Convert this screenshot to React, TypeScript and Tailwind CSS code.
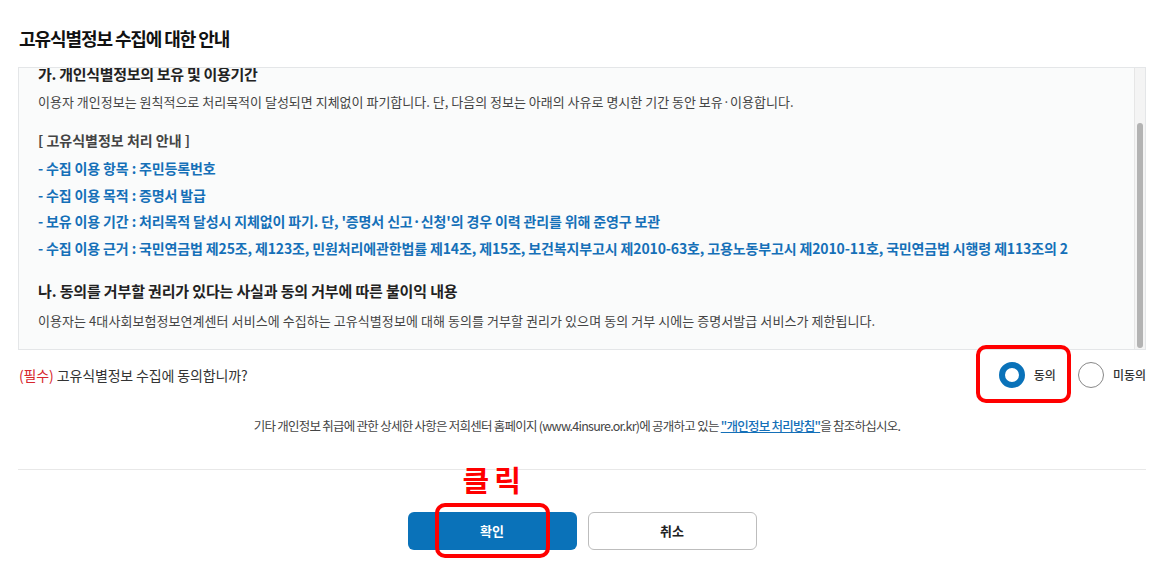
import { useState } from 'react'

const blueLines = [
  ['- 수집 이용 항목 : ', '주민등록번호'],
  ['- 수집 이용 목적 : ', '증명서 발급'],
  ['- 보유 이용 기간 : ', "처리목적 달성시 지체없이 파기. 단, '증명서 신고·신청'의 경우 이력 관리를 위해 준영구 보관"],
  [
    '- 수집 이용 근거 : ',
    '국민연금법 제25조, 제123조, 민원처리에관한법률 제14조, 제15조, 보건복지부고시 제2010-63호, 고용노동부고시 제2010-11호, 국민연금법 시행령 제113조의 2',
  ],
]

export default function App() {
  const [agree, setAgree] = useState(true)

  return (
    <div className="w-[1170px] h-[579px] bg-white overflow-hidden font-['Noto_Sans_CJK_KR','Noto_Sans',sans-serif] text-[#333]">
      <div className="ml-[18px] w-[1128px] pt-[28px]">
        {/* Title */}
        <h1 className="text-[18px] leading-[20px] font-bold text-[#111] tracking-[-0.06em] ml-[1px]">
          고유식별정보 수집에 대한 안내
        </h1>

        {/* Scroll box (content is scrolled down a little) */}
        <div className="mt-[19px] h-[283px] flex border border-[#e4e6e8] bg-[#fafbfb]">
          <div className="flex-1 overflow-hidden px-[19px]">
            <div className="-mt-[5px]">
              <h2 className="text-[15px] leading-[22px] font-bold text-[#222] tracking-[-0.02em]">
                가. 개인식별정보의 보유 및 이용기간
              </h2>
              <p className="mt-[7px] text-[13px] leading-[20px] text-[#444]">
                이용자 개인정보는 원칙적으로 처리목적이 달성되면 지체없이 파기합니다. 단, 다음의 정보는 아래의 사유로 명시한 기간 동안 보유·이용합니다.
              </p>
              <p className="mt-[17px] text-[14px] leading-[22px] font-bold text-[#444]">
                [ 고유식별정보 처리 안내 ]
              </p>
              <ul className="mt-[4px] text-[14px] leading-[26.6px] font-bold text-[#1570b8] tracking-[-0.01em]">
                {blueLines.map(([label, value]) => (
                  <li key={label}>
                    {label}
                    {value}
                  </li>
                ))}
              </ul>
              <h2 className="mt-[19px] text-[15px] leading-[22px] font-bold text-[#222] tracking-[-0.01em]">
                나. 동의를 거부할 권리가 있다는 사실과 동의 거부에 따른 불이익 내용
              </h2>
              <p className="mt-[9px] text-[13px] leading-[20px] text-[#444] tracking-[0.005em]">
                이용자는 4대사회보험정보연계센터 서비스에 수집하는 고유식별정보에 대해 동의를 거부할 권리가 있으며 동의 거부 시에는 증명서발급 서비스가 제한됩니다.
              </p>
            </div>
          </div>
          {/* scrollbar */}
          <div className="w-[11px] border-l border-[#e6e6e6] bg-[#f4f4f4] flex flex-col pt-[55px] pb-[1px] items-center">
            <div className="w-[6px] flex-1 rounded-full bg-[#b3b3b3]" />
          </div>
        </div>

        {/* Question row */}
        <div className="h-[50px] flex items-center justify-between">
          <p className="ml-[1px] text-[14px] text-[#333] tracking-[-0.01em]">
            <span className="text-[#d7262d]">(필수)</span> 고유식별정보 수집에 동의합니까?
          </p>
          <div className="flex items-center">
            <label className="relative flex items-center gap-[9px] cursor-pointer" onClick={() => setAgree(true)}>
              <span
                className={
                  agree
                    ? 'w-[26px] h-[26px] rounded-full border-[6px] border-[#0a72b9] bg-white'
                    : 'w-[26px] h-[26px] rounded-full border border-[#888] bg-white'
                }
              />
              <span className="text-[12px] text-[#333] font-medium">동의</span>
              <span className="absolute -left-[23px] -right-[15px] -top-[17px] -bottom-[15px] border-[4px] border-[#ff0000] rounded-[10px] pointer-events-none" />
            </label>
            <label className="ml-[22px] flex items-center gap-[9px] cursor-pointer" onClick={() => setAgree(false)}>
              <span
                className={
                  !agree
                    ? 'w-[26px] h-[26px] rounded-full border-[6px] border-[#0a72b9] bg-white'
                    : 'w-[26px] h-[26px] rounded-full border border-[#888] bg-white'
                }
              />
              <span className="text-[12px] text-[#333] font-medium">미동의</span>
            </label>
          </div>
        </div>

        {/* Footer note */}
        <p className="mt-[16px] text-center text-[12.5px] leading-[20px] text-[#444] tracking-[-0.06em] pr-[10px]">
          기타 개인정보 취급에 관한 상세한 사항은 저희센터 홈페이지 (www.4insure.or.kr)에 공개하고 있는{' '}
          <a href="#" className="text-[#1570b8] underline font-medium">
            "개인정보 처리방침"
          </a>
          을 참조하십시오.
        </p>

        <hr className="mt-[33px] border-t border-[#e8e8e8]" />

        {/* Buttons */}
        <div className="mt-[42px] flex justify-center gap-[11px]">
          <button className="relative w-[169px] h-[38px] rounded-[6px] bg-[#0a72b9] text-white text-[13px] font-bold">
            확인
            <span className="absolute -top-[50px] left-[55px] text-[29px] leading-[34px] font-bold text-[#ff0000] tracking-[5px] whitespace-nowrap">
              클릭
            </span>
            <span className="absolute left-[27px] right-[27px] -top-[9px] -bottom-[8px] border-[4px] border-[#ff0000] rounded-[10px] pointer-events-none" />
          </button>
          <button className="w-[169px] h-[38px] rounded-[6px] bg-white border border-[#bdbdbd] text-[#222] text-[13px] font-bold">
            취소
          </button>
        </div>
      </div>
    </div>
  )
}
